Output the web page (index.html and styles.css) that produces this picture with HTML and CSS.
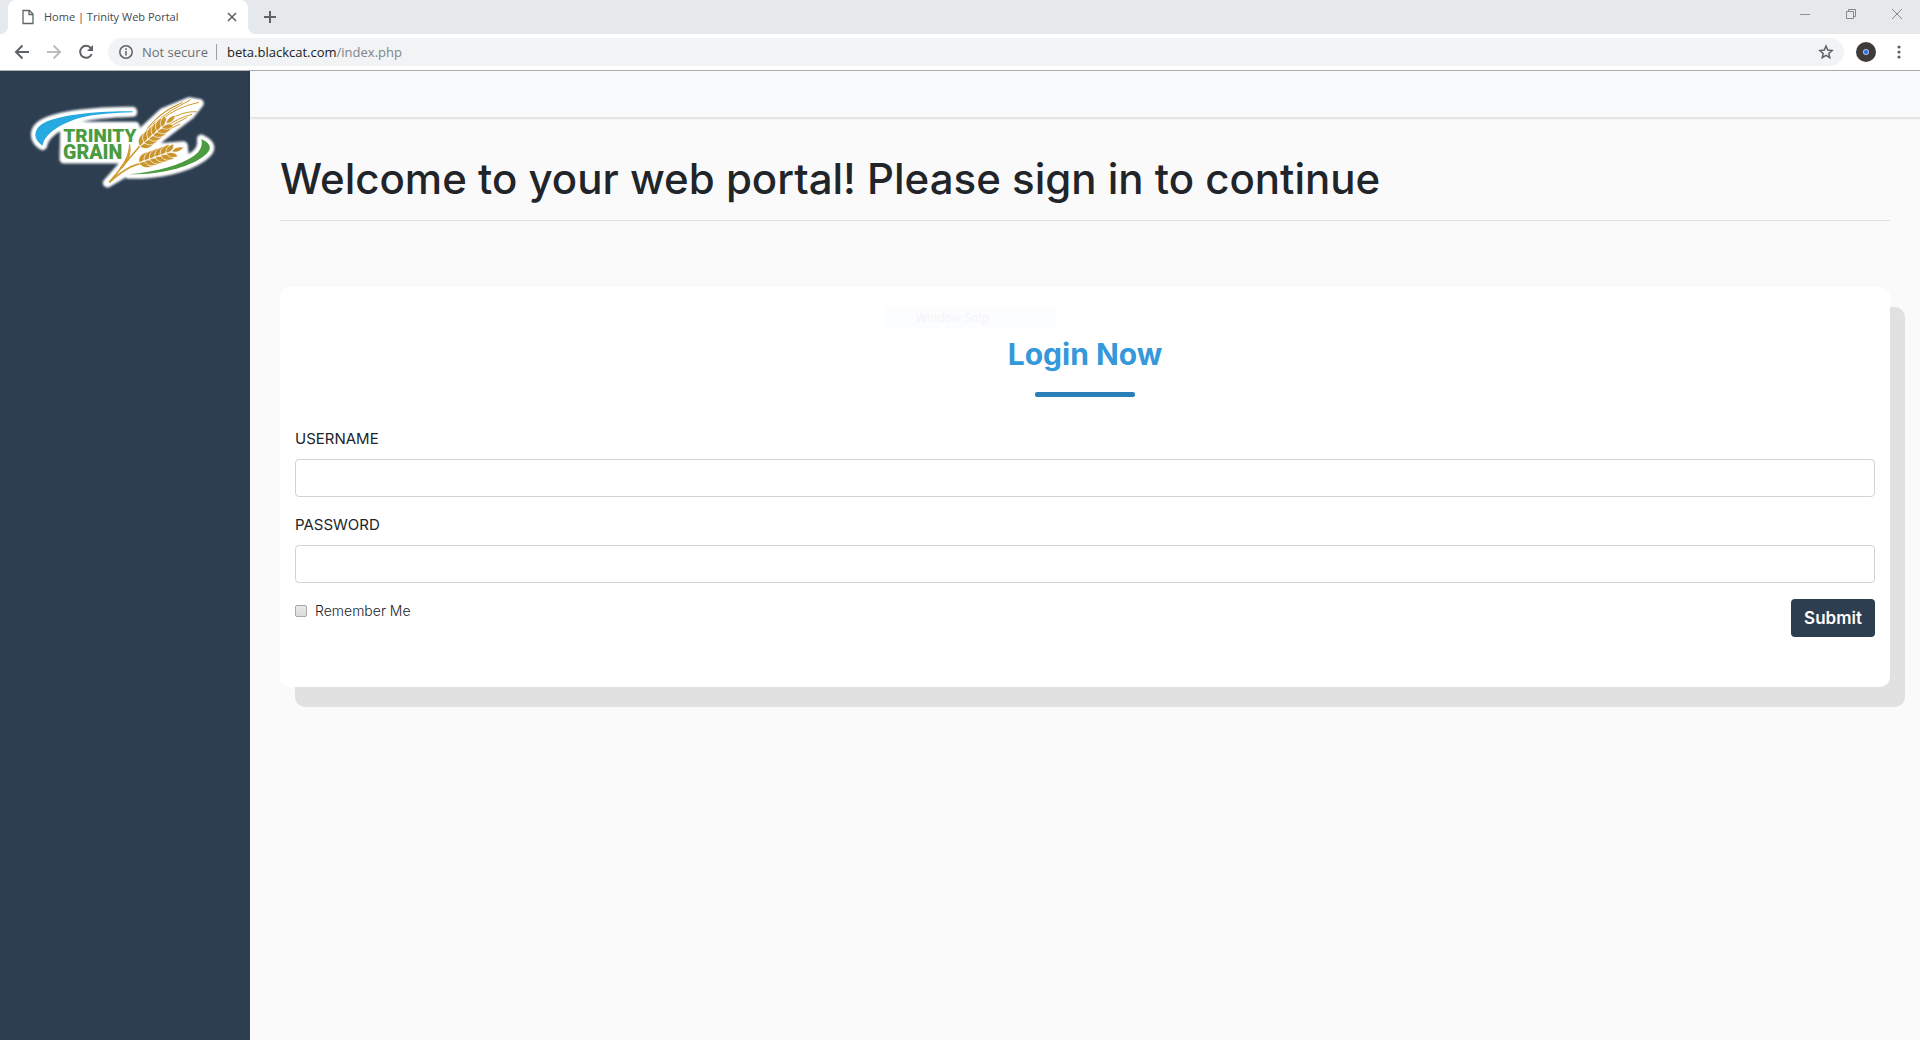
FILE: index.html
```html
<!DOCTYPE html>
<html lang="en">
<head>
<meta charset="utf-8">
<title>Home | Trinity Web Portal</title>
<link rel="stylesheet" href="styles.css">
</head>
<body>
<div class="browser">
  <div class="tabstrip">
    <div class="tab">
      <svg class="tab-icon" width="12" height="16" viewBox="0 0 12 16" fill="none" stroke="#5f6368" stroke-width="1.3"><path d="M1 1.5h6.5L11 5v9.500H1zM7 1.500V5.500h4"/></svg>
      <span class="tab-title">Home | Trinity Web Portal</span>
      <button class="icon-btn" aria-label="Close tab"><svg width="10" height="10" viewBox="0 0 10 10" stroke="#5f6368" stroke-width="1.6"><path d="M1 1l8 8M9 1L1 9"/></svg></button>
    </div>
    <button class="icon-btn new-tab" aria-label="New tab"><svg width="14" height="14" viewBox="0 0 14 14" stroke="#5f6368" stroke-width="2"><path d="M7 1v12M1 7h12"/></svg></button>
    <div class="window-controls">
      <button class="icon-btn" aria-label="Minimize"><svg width="12" height="12" viewBox="0 0 12 12" stroke="#8d9194"><path d="M1 6.500h10"/></svg></button>
      <button class="icon-btn" aria-label="Restore"><svg width="12" height="12" viewBox="0 0 12 12" fill="none" stroke="#85898c"><path d="M1.500 3.500h7v7h-7zM3.500 3.500v-2h7v7h-2"/></svg></button>
      <button class="icon-btn" aria-label="Close window"><svg width="12" height="12" viewBox="0 0 12 12" stroke="#85898c"><path d="M1 1l10 10M11 1L1 11"/></svg></button>
    </div>
  </div>
  <div class="toolbar">
    <div class="nav">
      <button class="icon-btn" aria-label="Back"><svg width="16" height="16" viewBox="0 0 16 16" fill="none" stroke="#5f6368" stroke-width="2"><path d="M15 8H2M8.500 1.500L2 8l6.500 6.500"/></svg></button>
      <button class="icon-btn" aria-label="Forward"><svg width="16" height="16" viewBox="0 0 16 16" fill="none" stroke="#babcbe" stroke-width="2"><path d="M1 8h13M7.500 1.500L14 8l-6.500 6.500"/></svg></button>
      <button class="icon-btn" aria-label="Reload"><svg width="16" height="16" viewBox="0 0 16 16" fill="none" stroke="#5f6368" stroke-width="2"><path d="M12.800 4A6 6 0 1 0 13.700 10"/><path d="M15 1v6H9z" fill="#5f6368" stroke="none"/></svg></button>
    </div>
    <div class="address">
      <svg width="14" height="14" viewBox="0 0 14 14" fill="none" stroke="#5f6368" stroke-width="1.500"><circle cx="7" cy="7" r="6.200"/><path d="M7 6v4.500M7 3.300v1.600"/></svg>
      <span class="secure">Not secure</span>
      <span class="url"><b>beta.blackcat.com</b>/index.php</span>
      <button class="icon-btn star" aria-label="Bookmark"><svg width="16" height="16" viewBox="0 0 16 16" fill="none" stroke="#5f6368" stroke-width="1.500"><path d="M8 2l1.700 4.100 4.400.400-3.300 2.900 1 4.300L8 11.400l-3.800 2.300 1-4.300-3.300-2.900 4.400-.400z"/></svg></button>
    </div>
    <button class="icon-btn" aria-label="Profile"><svg width="20" height="20" viewBox="0 0 20 20"><circle cx="10" cy="10" r="10" fill="#3f3b39"/><circle cx="10" cy="10" r="3" fill="#a9c0ef"/><circle cx="10" cy="10" r="2" fill="#2f6be0"/></svg></button>
    <button class="icon-btn" aria-label="Menu"><svg width="4" height="14" viewBox="0 0 4 14" fill="#5f6368"><circle cx="2" cy="2" r="1.600"/><circle cx="2" cy="7" r="1.600"/><circle cx="2" cy="12" r="1.600"/></svg></button>
  </div>
</div>
<div class="page">
  <aside class="sidebar">
    <svg class="logo" viewBox="0 0 630 345" role="img" aria-label="Trinity Grain">
      <defs>
        <filter id="soft" x="-5%" y="-10%" width="110%" height="120%"><feGaussianBlur stdDeviation="3"/></filter>
        <path id="kernel" d="M-4 0C-3-14 8-25 31-23C29-9 18 0-4 0Z"/>
        <g id="pair"><use href="#kernel"/><use href="#kernel" transform="scale(1 -1)"/></g>
        <g id="ear">
          <use href="#pair"/><use href="#pair" x="17"/><use href="#pair" x="34"/><use href="#pair" x="51"/><use href="#pair" x="68"/>
          <use href="#pair" transform="translate(86) scale(.85)"/>
          <path d="M100 0C110-9 124-9 138 0C124 9 110 9 100 0Z"/>
        </g>
        <path id="blue" d="M338 79C245 77 105 88 62 120C38 139 42 166 68 182C72 151 112 119 178 99C228 86 285 84 338 82Z"/>
        <path id="green" d="M544 162C578 178 577 196 548 216C500 250 418 269 326 268C414 260 482 239 521 213C540 199 549 184 544 162Z"/>
      </defs>
      <g filter="url(#soft)" fill="#fff" stroke="#fff" stroke-width="27" stroke-linejoin="round">
        <use href="#blue"/><use href="#green"/>
        <path d="M134 124H346V190L303 222H132Z"/>
        <path d="M262 294L312 238 325 182 361 165 372 136 430 82 508 50 538 55 512 88 455 132 404 172 380 205 400 190 490 182 492 204 420 239 340 248 310 266Z"/>
      </g>
      <use href="#blue" fill="#27a9e1"/>
      <use href="#green" fill="#4b9b41"/>
      <g class="logo-text"><text x="130" y="170">TRINITY</text><text class="logo-grain" x="129" y="221">GRAIN</text></g>
      <g fill="none" stroke="#cf9a2e" stroke-width="3">
        <path d="M268 292Q318 232 364 178" stroke-width="5"/><path d="M268 292Q324 242 362 236" stroke-width="5"/>
        <path d="M299 251Q327 218 329 178Q337 214 306 249" fill="#cf9a2e"/>
        <path d="M372 146Q413 82 476 58M384 128Q423 80 488 52M398 118Q452 72 512 44M424 104Q470 66 537 52M446 105Q490 78 530 80M432 128Q476 98 516 88M420 144Q461 116 502 97M405 158Q444 132 480 117" stroke-width="3"/>
      </g>
      <g fill="#cb952d" stroke="#fff" stroke-width="2">
        <use href="#ear" transform="translate(363 181) rotate(-41)"/>
        <use href="#ear" transform="translate(361 232) rotate(-19)"/>
      </g>
    </svg>
  </aside>
  <main class="content">
    <nav class="topbar"></nav>
    <div class="body">
      <h1 class="welcome">Welcome to your web portal! Please sign in to continue</h1>
      <form class="card">
        <span class="snip">Window Snip</span>
        <h2 class="card-title">Login Now</h2>
        <div class="field"><label for="username">USERNAME</label><input id="username" type="text"></div>
        <div class="field"><label for="password">PASSWORD</label><input id="password" type="password"></div>
        <div class="actions">
          <label class="remember"><input type="checkbox"> Remember Me</label>
          <button class="submit" type="button">Submit</button>
        </div>
      </form>
    </div>
  </main>
</div>
</body>
</html>
```
FILE: styles.css
```css
* { box-sizing: border-box; }
body {
  margin: 0;
  min-height: 100vh;
  display: flex;
  flex-direction: column;
  background: #fafafa;
  color: #212529;
  font-family: Inter, "Open Sans", sans-serif;
}
svg { display: block; }
.icon-btn { display: flex; padding: 0; border: 0; background: none; }

/* Browser frame */
.browser { font-family: "Open Sans", "Noto Sans", sans-serif; border-bottom: 1px solid #b4b1b4; }
.tabstrip { display: flex; height: 34px; padding: 0 17px 0 8px; background: #e5e9ec; }
.tab {
  position: relative;
  display: flex;
  align-items: center;
  width: 240px;
  padding: 0 11px 0 14px;
  border-radius: 8px 8px 0 0;
  background: #fff;
  color: #45494d;
  font-size: 11px;
}
.tab::before, .tab::after { content: ""; position: absolute; bottom: 0; width: 8px; height: 8px; }
.tab::before { right: 100%; background: radial-gradient(circle at 0 0, transparent 8px, #fff 8px); }
.tab::after { left: 100%; background: radial-gradient(circle at 100% 0, transparent 8px, #fff 8px); }
.tab-title { flex: 1; margin-left: 10px; padding-bottom: 2px; white-space: nowrap; }
.new-tab { align-items: center; margin-left: 15px; }
.window-controls { display: flex; gap: 34px; margin-left: auto; padding-top: 8px; }
.toolbar { display: flex; align-items: center; height: 36px; padding: 0 19px 0 14px; background: #fff; }
.nav { display: flex; gap: 16px; margin-right: 14px; }
.address {
  display: flex;
  flex: 1;
  align-items: center;
  height: 28px;
  margin-right: 12px;
  padding: 0 10px 0 11px;
  border-radius: 14px;
  background: #f1f3f4;
  font-size: 13px;
}
.secure { margin-left: 9px; padding-right: 8px; border-right: 1px solid #9aa0a6; color: #6b6f74; line-height: 16px; }
.url { margin-left: 10px; color: #80868b; }
.url b { color: #202124; font-weight: 400; }
.star { margin-left: auto; }
.address + .icon-btn { margin-right: 21px; }

/* Portal */
.page { display: flex; flex: 1; }
.sidebar { width: 250px; padding: 14px 20px; background: #2d3e50; }
.logo { width: 100%; }
.logo-text { fill: #4b9b41; font-family: Roboto, sans-serif; font-size: 57px; font-weight: 900; }
.logo-grain { font-size: 59px; }
.content { flex: 1; }
.topbar { height: 46px; background: #f8fafc; box-shadow: 0 1px 2px 1px rgba(0, 0, 0, .1); }
.body { padding: 34px 30px; }
.welcome {
  margin: 0 0 66px;
  padding-bottom: 13px;
  border-bottom: 1px solid #dfe0e1;
  font-size: 42px;
  font-weight: 500;
  line-height: 56px;
}
.card {
  position: relative;
  padding: 47px 15px 50px;
  border-radius: 10px;
  background: #fff;
  box-shadow: 15px 20px 0 #e1e1e1;
}
.snip {
  position: absolute;
  top: 20px;
  left: 604px;
  width: 173px;
  padding-left: 32px;
  background: #fcfdff;
  color: #f4f4f5;
  font: 12px/22px "Open Sans", sans-serif;
}
.card-title { margin: 0 0 30px; color: #3498db; font-size: 30px; font-weight: 700; line-height: 40px; text-align: center; }
.card-title::after { content: ""; display: block; width: 100px; height: 5px; margin: 18px auto 0; border-radius: 2px; background: #2980b9; }
.field { margin-bottom: 16px; }
.field label { display: block; margin-bottom: 8px; font-size: 15px; line-height: 24px; }
.field input { display: block; width: 100%; height: 38px; padding: 6px 12px; border: 1px solid #ced4da; border-radius: 4px; background: #fff; }
.actions { display: flex; align-items: flex-start; justify-content: space-between; }
.remember { display: flex; align-items: center; gap: 8px; font-size: 14px; font-weight: 300; line-height: 24px; }
.remember input {
  appearance: none;
  width: 12px;
  height: 12px;
  margin: 0;
  border: 1px solid #a8a8a8;
  border-radius: 2px;
  background: linear-gradient(#e9e9e9, #dcdcdc);
}
.submit { min-width: 84px; height: 38px; padding: 0 12px; border: 0; border-radius: 4px; background: #2d3e50; color: #fff; font: 600 17px/24px Inter, sans-serif; }
```
